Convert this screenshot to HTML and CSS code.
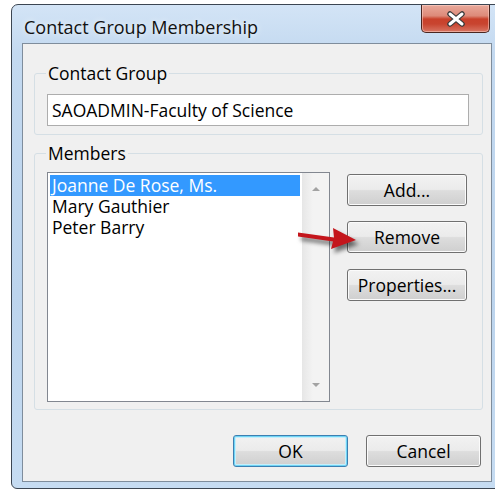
FILE: index.html
```html
<!DOCTYPE html>
<html lang="en">
<head>
<meta charset="utf-8">
<title>Contact Group Membership</title>
<link rel="stylesheet" href="styles.css">
</head>
<body>
<div class="window">
  <div class="titlebar">
    <span class="title">Contact Group Membership</span>
    <button class="close" aria-label="Close">
      <svg width="20" height="16" viewBox="0 0 20 16">
        <path d="M4 3 L16 13 M16 3 L4 13" stroke="#3a3a3a" stroke-width="5.5" stroke-linecap="round"/>
        <path d="M4 3 L16 13 M16 3 L4 13" stroke="#ffffff" stroke-width="3" stroke-linecap="round"/>
      </svg>
    </button>
  </div>
  <div class="content">
    <fieldset class="group group-contact">
      <legend>Contact Group</legend>
      <div class="textbox">SAOADMIN-Faculty of Science</div>
    </fieldset>
    <fieldset class="group group-members">
      <legend>Members</legend>
      <div class="members-row">
        <div class="listbox">
          <ul class="items">
            <li class="item selected">Joanne De Rose, Ms.</li>
            <li class="item">Mary Gauthier</li>
            <li class="item">Peter Barry</li>
          </ul>
          <div class="scrollbar">
            <div class="sb-btn"><span class="tri tri-up"></span></div>
            <div class="sb-track"></div>
            <div class="sb-btn"><span class="tri tri-down"></span></div>
          </div>
        </div>
        <div class="side-buttons">
          <button class="btn">Add...</button>
          <button class="btn">Remove</button>
          <button class="btn">Properties...</button>
        </div>
      </div>
    </fieldset>
    <div class="footer">
      <button class="btn btn-default">OK</button>
      <button class="btn">Cancel</button>
    </div>
  </div>
</div>
<svg class="pointer" width="80" height="44" viewBox="0 0 80 44">
  <path d="M8 12.5 L44 17.5 L43 8 L66 20 L41 29 L43 21.5 L8 16.5 Z" fill="#c4161c"/>
</svg>
</body>
</html>
```

FILE: styles.css
```css
html, body {
  margin: 0;
  padding: 0;
  background: #ffffff;
  overflow: hidden;
}

body {
  position: relative;
  width: 495px;
  height: 489px;
  font-family: "Open Sans", "Noto Sans", sans-serif;
  font-size: 17.5px;
  color: #000;
}

/* Aero-style window frame */
.window {
  box-sizing: border-box;
  margin: 4px 0 0 11px;
  width: 492px;
  height: 485px;
  border: 1px solid #3c4652;
  border-radius: 7px 7px 6px 6px;
  background: linear-gradient(to bottom, #d3e4f6 0%, #c3d9f0 10%, #bcd4ed 60%, #c6dcf2 100%);
  padding: 0 10px 6px 10px;
  display: flex;
  flex-direction: column;
}

.titlebar {
  height: 38px;
  flex: none;
  display: flex;
  justify-content: space-between;
  align-items: flex-start;
}

.title {
  margin: 11px 0 0 2px;
  font-size: 18px;
  line-height: 22px;
  color: #111;
  text-shadow: 0 0 6px rgba(255, 255, 255, 0.9);
}

.close {
  width: 69px;
  height: 28px;
  margin-right: 2px;
  padding: 0;
  border: 1px solid #4a2620;
  border-top: none;
  border-radius: 0 0 5px 5px;
  background: linear-gradient(to bottom, #e9a99b 0%, #dd8a79 40%, #c9412b 52%, #c8442f 70%, #d87563 100%);
  box-shadow: inset 0 0 0 1px rgba(255, 220, 210, 0.5);
  display: flex;
  align-items: center;
  justify-content: center;
}

.content {
  flex: 1;
  box-sizing: border-box;
  border: 1px solid #7f8d9c;
  background: #f0f0f0;
  padding: 19px 8px 14px 11px;
  display: flex;
  flex-direction: column;
}

/* Group boxes */
.group {
  margin: 0;
  border: 1px solid #d5dfe5;
  border-radius: 3px;
  min-width: 0;
}

.group legend {
  padding: 0 2px;
  margin-left: -1px;
  line-height: 20px;
  font-size: 17.5px;
}

.group-contact {
  padding: 11px 13px 8px 12px;
}

.textbox {
  box-sizing: border-box;
  height: 32px;
  border: 1px solid #adadad;
  background: #fff;
  padding-left: 4px;
  line-height: 30px;
  white-space: nowrap;
}

.group-members {
  margin-top: 8px;
  padding: 9px 14px 7px 12px;
}

.members-row {
  display: flex;
  align-items: flex-start;
  gap: 17px;
}

.listbox {
  box-sizing: border-box;
  width: 283px;
  height: 230px;
  border: 1px solid #828790;
  background: #fff;
  display: flex;
}

.items {
  list-style: none;
  margin: 0;
  padding: 2px 2px;
  flex: 1;
}

.item {
  height: 21px;
  line-height: 21px;
  padding-left: 2px;
  white-space: nowrap;
}

.item.selected {
  background: #3399ff;
  color: #fff;
}

.scrollbar {
  width: 27px;
  display: flex;
  flex-direction: column;
  background: linear-gradient(to right, #e6e6e6 0%, #f3f3f3 40%, #f3f3f3 100%);
}

.sb-btn {
  height: 32px;
  display: flex;
  align-items: center;
  justify-content: center;
}

.sb-track {
  flex: 1;
}

.tri {
  width: 0;
  height: 0;
  border-left: 4px solid transparent;
  border-right: 4px solid transparent;
}

.tri-up {
  border-bottom: 4px solid #a3a3a3;
}

.tri-down {
  border-top: 4px solid #a3a3a3;
}

.side-buttons {
  display: flex;
  flex-direction: column;
  gap: 15px;
  padding-top: 2px;
}

/* Push buttons */
.btn {
  box-sizing: border-box;
  width: 120px;
  height: 32px;
  padding: 0;
  border: 1px solid #707070;
  border-radius: 3px;
  background: linear-gradient(to bottom, #f2f2f2 0%, #ebebeb 48%, #dddddd 52%, #cfcfcf 100%);
  box-shadow: inset 0 0 0 1px #fbfbfb;
  font-family: inherit;
  font-size: 17.5px;
  color: #000;
}

.side-buttons .btn:nth-child(3) {
  margin-top: 1px;
}

.footer {
  margin-top: auto;
  display: flex;
  justify-content: flex-end;
  gap: 18px;
  padding-right: 2px;
}

.footer .btn {
  width: 115px;
}

.btn-default {
  border-color: #3c7fb1;
  box-shadow: inset 0 0 0 1px #6fd4f5, inset 0 0 0 2px #c6eefb;
}

/* Callout arrow drawn over the dialog */
.pointer {
  position: absolute;
  left: 290px;
  top: 220px;
  filter: drop-shadow(3px 4px 2px rgba(0, 0, 0, 0.55));
}
```
